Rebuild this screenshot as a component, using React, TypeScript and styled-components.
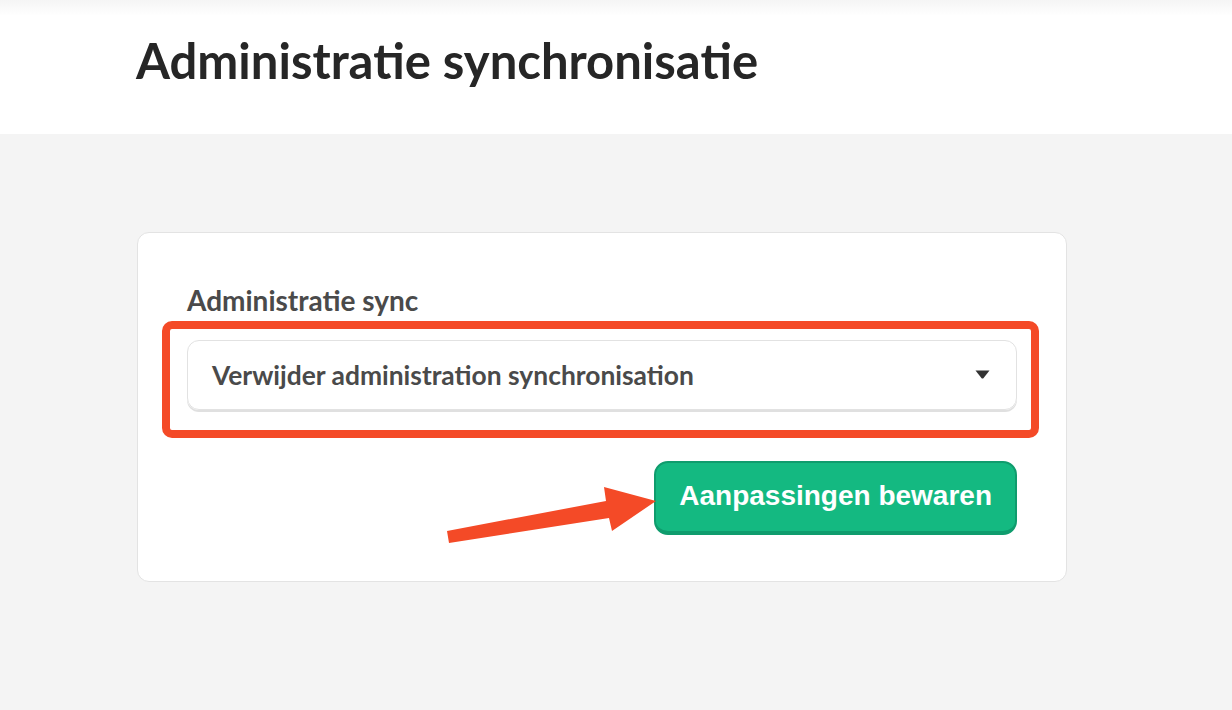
import styled, { createGlobalStyle } from 'styled-components';

const GlobalStyle = createGlobalStyle`
  html, body {
    margin: 0;
    padding: 0;
    background: #f4f4f4;
  }
  body {
    font-family: Lato, 'Noto Sans', sans-serif;
  }
`;

const Page = styled.div`
  min-height: 710px;
  background: #f4f4f4;
`;

const Header = styled.header`
  height: 134px;
  background: linear-gradient(to bottom, #f5f5f5 0px, #ffffff 16px);
  padding: 31px 0 0 136px;
  box-sizing: border-box;
`;

const Title = styled.h1`
  margin: 0;
  font-family: Lato, sans-serif;
  font-weight: 700;
  font-size: 49px;
  line-height: 59px;
  color: #262626;
`;

const Content = styled.main`
  padding: 98px 0 0 137px;
`;

const Card = styled.section`
  position: relative;
  width: 930px;
  box-sizing: border-box;
  background: #ffffff;
  border: 1px solid #e3e3e3;
  border-radius: 12px;
  padding: 50px 49px 46px;
  display: flex;
  flex-direction: column;
`;

const Label = styled.label`
  font-family: Lato, sans-serif;
  font-weight: 700;
  font-size: 28px;
  line-height: 34px;
  color: #4a4a4a;
  margin-bottom: 4px;
`;

const Highlight = styled.div`
  margin: 0 -22px 0 -25px;
  border: 8px solid #f44a27;
  border-radius: 10px;
  padding: 11px 14px 20px 17px;
`;

const Select = styled.div`
  height: 70px;
  box-sizing: border-box;
  border: 1.5px solid #e2e2e2;
  border-radius: 12px;
  box-shadow: 0 2px 0 #e0e0e0;
  display: flex;
  align-items: center;
  justify-content: space-between;
  padding: 0 26px 0 24px;
  font-family: Lato, sans-serif;
  font-weight: 700;
  font-size: 26.4px;
  color: #4a4a4a;
`;

const Caret = styled.svg`
  width: 15px;
  height: 9px;
  margin-top: -2px;
`;

const Actions = styled.div`
  display: flex;
  justify-content: flex-end;
  margin-top: 23px;
`;

const SaveButton = styled.button`
  height: 74px;
  padding: 0 23px 2px;
  box-sizing: border-box;
  background: #14b981;
  border: 2px solid #0f9c6d;
  border-bottom-width: 4px;
  border-radius: 14px;
  color: #ffffff;
  font-family: 'Liberation Sans', Arial, sans-serif;
  font-weight: 700;
  font-size: 28px;
  cursor: pointer;
`;

const Arrow = styled.svg`
  position: absolute;
  left: 303px;
  top: 248px;
  width: 220px;
  height: 70px;
`;

export default function App() {
  return (
    <Page>
      <GlobalStyle />
      <Header>
        <Title>Administratie synchronisatie</Title>
      </Header>
      <Content>
        <Card>
          <Label>Administratie sync</Label>
          <Highlight>
            <Select>
              <span>Verwijder administration synchronisation</span>
              <Caret viewBox="0 0 15 9">
                <path d="M0.5 0.5 H14.5 L8.6 8 Q7.5 9.2 6.4 8 Z" fill="#333" />
              </Caret>
            </Select>
          </Highlight>
          <Actions>
            <SaveButton>Aanpassingen bewaren</SaveButton>
          </Actions>
          <Arrow viewBox="0 0 220 70">
            <polygon
              points="6,50 165,20 163,6 215,20 171,50 168,37 8,62"
              fill="#f44a27"
            />
          </Arrow>
        </Card>
      </Content>
    </Page>
  );
}
